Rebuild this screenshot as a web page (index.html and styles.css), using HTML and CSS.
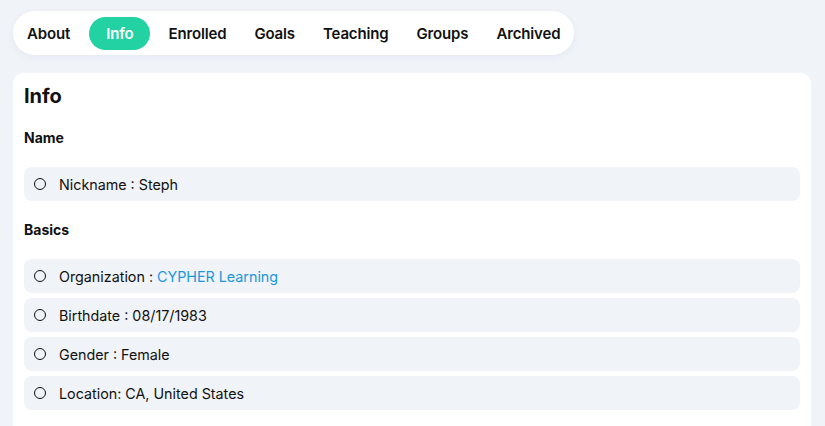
FILE: index.html
```html
<!DOCTYPE html>
<html lang="en">
<head>
<meta charset="utf-8">
<title>Info</title>
<link rel="stylesheet" href="styles.css">
</head>
<body>
<div class="page">
  <nav class="tabs">
    <a class="tab">About</a>
    <a class="tab active">Info</a>
    <a class="tab">Enrolled</a>
    <a class="tab">Goals</a>
    <a class="tab">Teaching</a>
    <a class="tab">Groups</a>
    <a class="tab">Archived</a>
  </nav>
  <section class="card">
    <h1 class="title">Info</h1>
    <h2 class="section-title">Name</h2>
    <ul class="list">
      <li class="item"><span class="dot"></span>Nickname : Steph</li>
    </ul>
    <h2 class="section-title">Basics</h2>
    <ul class="list">
      <li class="item"><span class="dot"></span>Organization :&nbsp;<a class="link">CYPHER Learning</a></li>
      <li class="item"><span class="dot"></span>Birthdate : 08/17/1983</li>
      <li class="item"><span class="dot"></span>Gender : Female</li>
      <li class="item"><span class="dot"></span>Location: CA, United States</li>
    </ul>
  </section>
</div>
</body>
</html>
```

FILE: styles.css
```css
* { box-sizing: border-box; }
html, body { margin: 0; padding: 0; }
body {
  background: #f0f3f8;
  font-family: Inter, "Open Sans", sans-serif;
  color: #111;
  width: 825px;
  height: 426px;
  overflow: hidden;
}
.page {
  padding: 11px 14px 0 13px;
  display: flex;
  flex-direction: column;
  align-items: flex-start;
  gap: 18px;
}
.tabs {
  display: flex;
  align-items: center;
  height: 44px;
  background: #fff;
  border-radius: 22px;
  box-shadow: 0 2px 8px rgba(30, 40, 80, 0.05);
}
.tab {
  display: flex;
  align-items: center;
  height: 33px;
  padding: 0 14px;
  font-size: 15px;
  font-weight: 600;
  color: #111;
  border-radius: 17px;
  letter-spacing: -0.15px;
}
.tab.active {
  background: #22d2a3;
  color: #fff;
  padding: 0 17px;
  margin: 0 4px 0 5px;
}
.card {
  align-self: stretch;
  background: #fff;
  border-radius: 10px 10px 0 0;
  padding: 11px 11px 0 11px;
  height: 353px;
}
.title {
  margin: 0;
  font-size: 20px;
  font-weight: 700;
  line-height: 24px;
}
.section-title {
  margin: 20px 0 0 0;
  font-size: 14px;
  font-weight: 700;
  line-height: 20px;
}
.list {
  list-style: none;
  margin: 19px 0 0 0;
  padding: 0;
  display: flex;
  flex-direction: column;
  gap: 5px;
}
.list + .section-title { margin-top: 19px; }
.item {
  display: flex;
  align-items: center;
  height: 34px;
  background: #f0f3f8;
  border-radius: 8px;
  padding-left: 10px;
  font-size: 14.3px;
}
.dot {
  width: 12px;
  height: 12px;
  border: 1.5px solid #111;
  border-radius: 50%;
  margin-right: 13px;
  flex: none;
}
.link { color: #1a98de; }
```
